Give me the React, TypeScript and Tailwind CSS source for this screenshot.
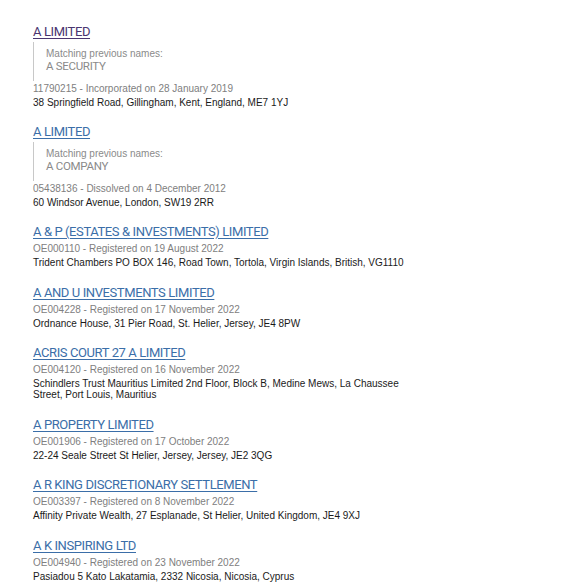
import React from 'react'

type Result = {
  name: string
  visited?: boolean
  previous?: string
  meta: string
  address: string
}

const results: Result[] = [
  {
    name: 'A LIMITED',
    visited: true,
    previous: 'A SECURITY',
    meta: '11790215 - Incorporated on 28 January 2019',
    address: '38 Springfield Road, Gillingham, Kent, England, ME7 1YJ',
  },
  {
    name: 'A LIMITED',
    previous: 'A COMPANY',
    meta: '05438136 - Dissolved on 4 December 2012',
    address: '60 Windsor Avenue, London, SW19 2RR',
  },
  {
    name: 'A & P (ESTATES & INVESTMENTS) LIMITED',
    meta: 'OE000110 - Registered on 19 August 2022',
    address: 'Trident Chambers PO BOX 146, Road Town, Tortola, Virgin Islands, British, VG1110',
  },
  {
    name: 'A AND U INVESTMENTS LIMITED',
    meta: 'OE004228 - Registered on 17 November 2022',
    address: 'Ordnance House, 31 Pier Road, St. Helier, Jersey, JE4 8PW',
  },
  {
    name: 'ACRIS COURT 27 A LIMITED',
    meta: 'OE004120 - Registered on 16 November 2022',
    address: 'Schindlers Trust Mauritius Limited 2nd Floor, Block B, Medine Mews, La Chaussee Street, Port Louis, Mauritius',
  },
  {
    name: 'A PROPERTY LIMITED',
    meta: 'OE001906 - Registered on 17 October 2022',
    address: '22-24 Seale Street St Helier, Jersey, Jersey, JE2 3QG',
  },
  {
    name: 'A R KING DISCRETIONARY SETTLEMENT',
    meta: 'OE003397 - Registered on 8 November 2022',
    address: 'Affinity Private Wealth, 27 Esplanade, St Helier, United Kingdom, JE4 9XJ',
  },
  {
    name: 'A K INSPIRING LTD',
    meta: 'OE004940 - Registered on 23 November 2022',
    address: 'Pasiadou 5 Kato Lakatamia, 2332 Nicosia, Nicosia, Cyprus',
  },
]

function ResultItem({ item }: { item: Result }) {
  return (
    <li className="mb-[15.5px]">
      <a
        href="#"
        className={
          'block h-[18px] text-[13px] leading-[18px] tracking-[-0.4px] underline underline-offset-2 font-["Roboto",sans-serif] ' +
          (item.visited ? 'text-[#4a3570]' : 'text-[#3b6ea8]')
        }
      >
        {item.name}
      </a>
      {item.previous && (
        <div className="mt-[1px] border-l border-[#c8c8c8] pt-[5px] pb-[7.5px] pl-[12px] leading-[13px]">
          <div className="text-[10px] text-[#8a8a8a] font-['Liberation_Sans',sans-serif]">Matching previous names:</div>
          <div className="text-[11.5px] tracking-[-0.3px] text-[#8a8a8a] font-['Roboto',sans-serif]">{item.previous}</div>
        </div>
      )}
      <p className="text-[10px] leading-[15px] text-[#808080] font-['Liberation_Sans',sans-serif]">{item.meta}</p>
      <p className="mt-[1px] w-[375px] text-[10px] leading-[11px] text-[#1a1a1a] font-['Liberation_Sans',sans-serif]">
        {item.address}
      </p>
    </li>
  )
}

export default function App() {
  return (
    <div className="min-h-[588px] w-[570px] bg-white pl-[33px] pt-[23px]">
      <ul>
        {results.map((item, i) => (
          <ResultItem key={i} item={item} />
        ))}
      </ul>
    </div>
  )
}
